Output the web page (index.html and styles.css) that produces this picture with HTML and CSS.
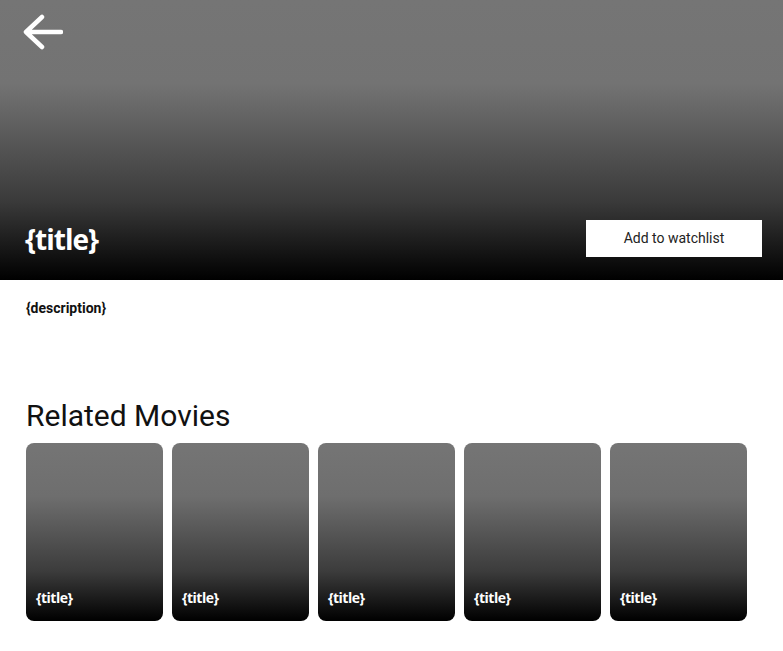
FILE: index.html
```html
<!DOCTYPE html>
<html>
<head>
<meta charset="utf-8">
<link rel="stylesheet" href="styles.css">
</head>
<body>
<header class="hero">
  <a class="back" href="#" aria-label="Back">
    <svg width="42" height="38" viewBox="0 0 42 38">
      <path d="M21 3 L5 18 L21 33 M5 18 L40 18" fill="none" stroke="#fff" stroke-width="4.5" stroke-linecap="round" stroke-linejoin="round"/>
    </svg>
  </a>
  <div class="hero-bottom">
    <h1 class="hero-title">{title}</h1>
    <button class="watch-btn">Add to watchlist</button>
  </div>
</header>
<main class="content">
  <p class="description">{description}</p>
  <h2 class="section-title">Related Movies</h2>
  <div class="cards">
    <div class="card"><span class="card-title">{title}</span></div>
    <div class="card"><span class="card-title">{title}</span></div>
    <div class="card"><span class="card-title">{title}</span></div>
    <div class="card"><span class="card-title">{title}</span></div>
    <div class="card"><span class="card-title">{title}</span></div>
  </div>
</main>
</body>
</html>
```
FILE: styles.css
```css
* { box-sizing: border-box; }
html, body { margin: 0; padding: 0; background: #fff; }
body { font-family: Roboto, "Liberation Sans", sans-serif; color: #111; }

.hero {
  height: 280px;
  background: linear-gradient(to bottom, #757575 0%, #737373 30%, #3a3a3a 72%, #000 100%);
  display: flex;
  flex-direction: column;
  justify-content: space-between;
  padding: 14px 21px 22px 25px;
}
.back { display: block; width: 42px; height: 38px; margin-left: -4px; }
.back svg { display: block; }
.hero-bottom {
  display: flex;
  align-items: center;
  justify-content: space-between;
}
.hero-title {
  margin: 0;
  color: #fff;
  font-family: "Open Sans", sans-serif;
  font-weight: 700;
  font-size: 28px;
  line-height: 38px;
  letter-spacing: -1px;
  font-variant-ligatures: none;
}
.watch-btn {
  width: 176px;
  height: 37px;
  border: 0;
  background: #fff;
  color: #222;
  font-family: Roboto, sans-serif;
  font-size: 14px;
  padding: 0;
  margin-top: -2px;
}
.content { padding: 0 26px; }
.description {
  margin: 20px 0 0;
  font-size: 14px;
  font-weight: 700;
  line-height: 16px;
}
.section-title {
  margin: 83px 0 0;
  font-size: 30px;
  font-weight: 400;
  line-height: 34px;
  color: #111;
}
.cards {
  display: flex;
  gap: 9px;
  margin-top: 10px;
}
.card {
  width: 137px;
  height: 178px;
  border-radius: 8px;
  background: linear-gradient(to bottom, #757575 0%, #6e6e6e 30%, #3c3c3c 72%, #000 100%);
  display: flex;
  align-items: flex-end;
  padding: 0 10px 14px;
}
.card-title {
  color: #fff;
  font-family: "Open Sans", sans-serif;
  font-weight: 700;
  font-size: 14px;
  line-height: 18px;
  letter-spacing: -0.5px;
}
```
